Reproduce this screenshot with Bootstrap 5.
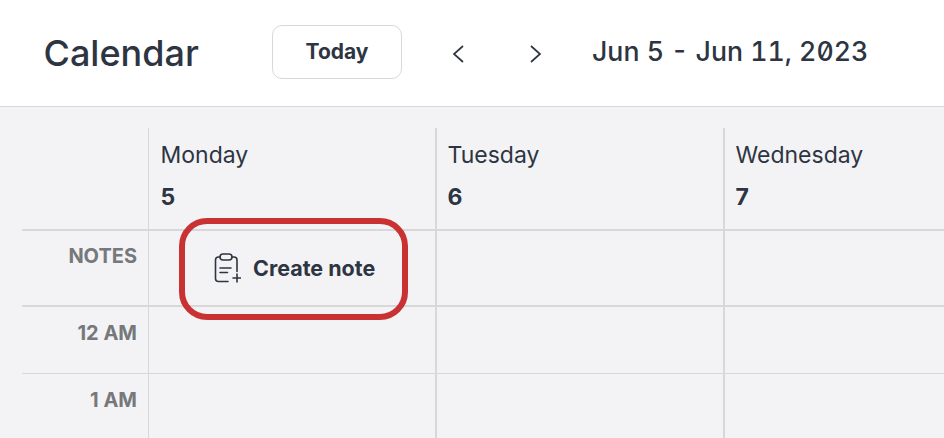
<!doctype html>
<html lang="en"><head><meta charset="utf-8"><title>Calendar</title>
<link href="https://cdn.jsdelivr.net/npm/bootstrap@5.3.0/dist/css/bootstrap.min.css" rel="stylesheet">
<style>
html,body{height:100%;overflow:hidden}
body{font-family:Inter,"Liberation Sans",sans-serif;color:#2e3542;background:#f3f3f5;width:944px;height:438px}
.topbar{height:107px;background:#fff;border-bottom:1px solid #d8d8da;padding-left:43.500px}
.page-title{font-size:36px;font-weight:450;line-height:1;margin:0;width:228.500px}
.today-btn{width:130px;height:54px;margin-top:-2px;border:1px solid #d8d8da;border-radius:10px;background:#fff;color:#2e3542;font-size:21px;font-weight:700;padding:0}
.today-btn:hover{background:#fff;color:#2e3542;border-color:#d8d8da}
.arrow{width:78px;height:40px;padding:0;border:0;background:none}
.arrows{margin-left:17px;margin-right:17px;margin-top:-2px}
.range{font-size:26.700px;font-weight:450;font-feature-settings:"tnum","zero";white-space:nowrap;margin-top:-3px}
.cal{position:relative;padding:21px 0 0 22px;width:944px;height:331px;overflow:hidden}
.cal-row{display:grid;grid-template-columns:126px 287px 288px 1fr}
.cell{border-left:2px solid #d8d8da}
.cell-first{border-left-width:1px}
.cell-head{height:101px;padding:14px 0 0 10.500px}
.cell-first.cell-head{padding-left:11.500px}
.row-notes{border-top:2px solid #d8d8da;border-bottom:2px solid #d8d8da;height:78px}
.row-hour{height:67px;border-bottom:1px solid #d8d8da}
.day-name{font-size:23px;line-height:27px}
.day-num{font-size:23px;font-weight:700;line-height:27px;margin-top:15px}
.side{font-size:20px;font-weight:700;color:#76787c;text-align:right;padding:14px 11px 0 0;line-height:22px}
.row-hour .side{padding-top:15px}
.create{height:100%;padding:0 0 0 63.500px;font-size:21.500px;font-weight:700;gap:12.500px}
.create svg{flex:none}
.ring{position:absolute;left:178.500px;top:111px;width:229px;height:101.500px;border:6px solid #c93232;border-radius:28px;pointer-events:none}
</style></head><body>
<header class="topbar d-flex align-items-center">
<h1 class="page-title">Calendar</h1>
<button class="btn today-btn" type="button">Today</button>
<div class="arrows d-flex">
<button class="arrow" type="button" aria-label="Previous"><svg width="14" height="20" viewBox="0 0 14 20" fill="none" stroke="#2e3542" stroke-width="1.7"><path d="M12 2 3 10l9 8"/></svg></button>
<button class="arrow" type="button" aria-label="Next"><svg width="14" height="20" viewBox="0 0 14 20" fill="none" stroke="#2e3542" stroke-width="1.7"><path d="M2 2l9 8-9 8"/></svg></button>
</div>
<div class="range">Jun 5 - Jun 11, 2023</div>
</header>
<main class="cal">
<div class="cal-row">
<div></div>
<div class="cell cell-first cell-head"><div class="day-name">Monday</div><div class="day-num">5</div></div>
<div class="cell cell-head"><div class="day-name">Tuesday</div><div class="day-num">6</div></div>
<div class="cell cell-head"><div class="day-name">Wednesday</div><div class="day-num">7</div></div>
</div>
<div class="cal-row row-notes">
<div class="side">NOTES</div>
<div class="cell cell-first"><div class="create d-flex align-items-center">
<svg width="28" height="30" viewBox="0 0 28 30" fill="none" stroke="#2e3542" stroke-width="1.6" stroke-linecap="round" stroke-linejoin="round"><path d="M7 4H5.500A3 3 0 0 0 2.500 7V25.500A3 3 0 0 0 5.500 28.500H15M19 4h2A3 3 0 0 1 24 7V18.500"/><rect x="7" y="1" width="12" height="6" rx="3"/><path d="M7 15h11M7 19.500h7.500M24 21v8M20 25h8"/></svg>
<span>Create note</span></div></div>
<div class="cell"></div><div class="cell"></div>
</div>
<div class="cal-row row-hour"><div class="side">12 AM</div><div class="cell cell-first"></div><div class="cell"></div><div class="cell"></div></div>
<div class="cal-row row-hour"><div class="side">1 AM</div><div class="cell cell-first"></div><div class="cell"></div><div class="cell"></div></div>
<div class="ring"></div>
</main>
<script src="https://cdn.jsdelivr.net/npm/bootstrap@5.3.0/dist/js/bootstrap.bundle.min.js"></script>
</body></html>
